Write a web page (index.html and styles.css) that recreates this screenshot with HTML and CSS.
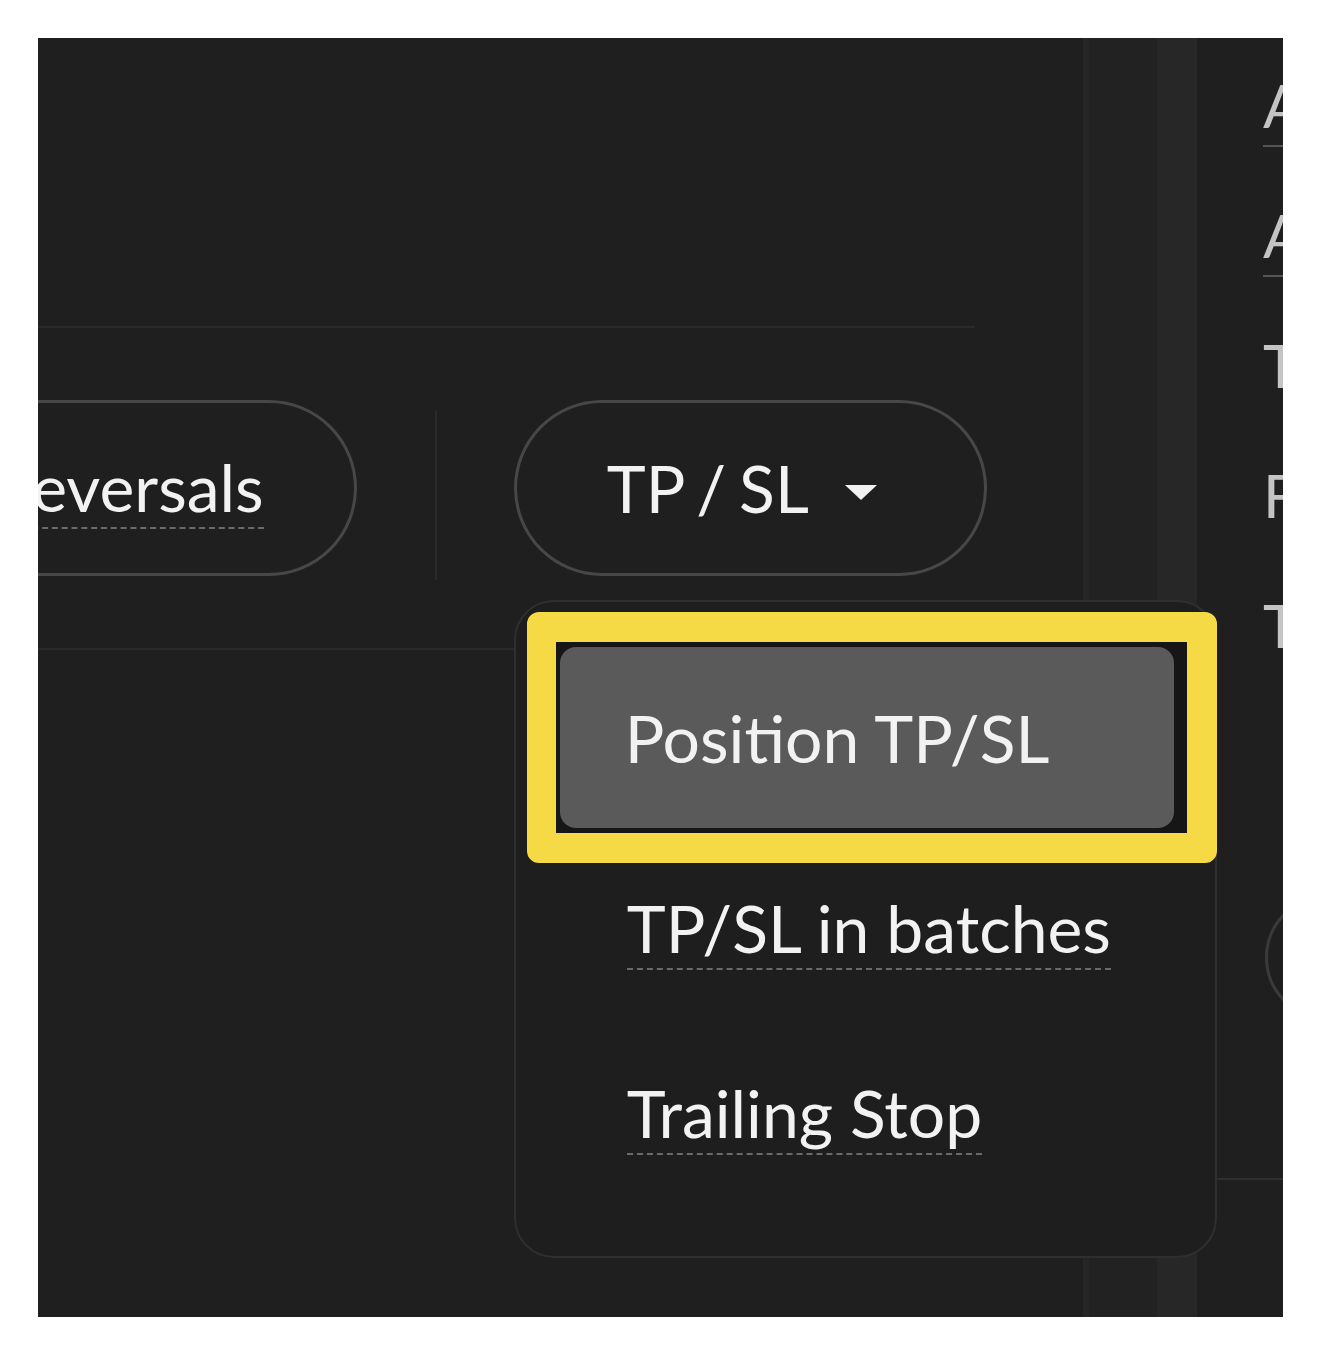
FILE: index.html
```html
<!DOCTYPE html>
<html lang="en">
<head>
    <meta charset="UTF-8">
    <meta name="viewport" content="width=device-width, initial-scale=1.0">
    <title>TP / SL menu</title>
    <link rel="stylesheet" href="styles.css">
</head>
<body>
    <div class="screen">
        <!-- Order form area -->
        <div class="main">
            <div class="top-area"></div>

            <div class="toolbar">
                <div class="pill"><span class="tip">Reversals</span></div>
                <span class="divider"></span>

                <!-- TP / SL dropdown, opened -->
                <div class="dropdown">
                    <div class="pill">TP / SL <span class="caret"></span></div>
                    <div class="menu">
                        <div class="menu-focus">
                            <div class="menu-item active">Position TP/SL</div>
                        </div>
                        <div class="menu-item"><span class="tip">TP/SL in batches</span></div>
                        <div class="menu-item"><span class="tip">Trailing Stop</span></div>
                    </div>
                </div>
            </div>
        </div>

        <div class="band band-a"></div>
        <div class="band band-b"></div>

        <!-- Right column, cut off by the screenshot -->
        <div class="side">
            <div class="side-row"><span class="side-label underlined">A</span></div>
            <div class="side-row"><span class="side-label underlined">A</span></div>
            <div class="side-row"><span class="side-label">T</span></div>
            <div class="side-row"><span class="side-label">F</span></div>
            <div class="side-row"><span class="side-label">T</span></div>
            <div class="side-circle"></div>
            <div class="side-foot"></div>
        </div>
    </div>
</body>
</html>
```

FILE: styles.css
```css
/* Colours */
:root {
    --bg-color: #1f1f1f;
    --text-color: #f2f2f2;
    --line-color: #2a2a2a;
    --pill-border: #474747;
    --item-active: #5a5a5a;
    --mark-color: #f6da45;
}

body {
    margin: 0;
    background-color: #ffffff;
    font-family: 'Lato', 'Open Sans', sans-serif;
}

/* Dark screenshot area */
.screen {
    display: flex;
    width: 1245px;
    height: 1279px;
    margin: 38px 0 37px 38px;
    background-color: var(--bg-color);
    color: var(--text-color);
    overflow: hidden;
}

.main {
    width: 1045px;
    flex-shrink: 0;
}

.top-area {
    width: 937px;
    height: 288px;
    border-bottom: 2px solid var(--line-color);
}

/* Toolbar with the pill buttons */
.toolbar {
    display: flex;
    align-items: flex-start;
    height: 248px;
    padding-top: 72px;
    margin-left: -138px;
    border-bottom: 2px solid var(--line-color);
}

.pill {
    display: flex;
    align-items: center;
    height: 176px;
    box-sizing: border-box;
    padding: 0 90px;
    border: 3px solid var(--pill-border);
    border-radius: 88px;
    font-size: 66px;
    line-height: 80px;
    white-space: nowrap;
}

.dropdown .pill {
    padding-right: 107px;
    word-spacing: -4px;
}

.tip {
    display: inline-block;
    border-bottom: 2px dashed #6a6a6a;
}

.caret {
    width: 0;
    height: 0;
    margin: 8px 0 0 36px;
    border-left: 16px solid transparent;
    border-right: 16px solid transparent;
    border-top: 15px solid var(--text-color);
}

.divider {
    width: 2px;
    height: 170px;
    margin: 10px 77px 0 78px;
    background-color: var(--line-color);
}

.dropdown {
    position: relative;
}

/* Opened menu */
.menu {
    position: absolute;
    top: 200px;
    left: 0;
    z-index: 2;
    width: 703px;
    height: 658px;
    box-sizing: border-box;
    padding: 10px 0 0 11px;
    border: 2px solid #2f2f2f;
    border-radius: 40px;
    background-color: #1e1e1e;
}

.menu-focus {
    width: 690px;
    box-sizing: border-box;
    padding: 5px 13px 5px 4px;
    border: 30px solid var(--mark-color);
    border-left-width: 29px;
    border-radius: 12px;
    background-color: #161616;
}

.menu-item {
    margin-top: 25px;
    padding-left: 100px;
    font-size: 66px;
    line-height: 80px;
}

.menu-item + .menu-item {
    margin-top: 103px;
}

.menu-item.active {
    margin: 0;
    padding-left: 65px;
    line-height: 181px;
    border-radius: 16px;
    background-color: var(--item-active);
}

/* Background strips on the right */
.band {
    flex-shrink: 0;
}

.band-a {
    width: 68px;
    border-left: 6px solid #262626;
    background-color: #222222;
}

.band-b {
    width: 40px;
    background-color: #272727;
}

.side {
    width: 86px;
    flex-shrink: 0;
    padding-top: 31px;
    padding-left: 66px;
    box-sizing: border-box;
}

.side-row {
    height: 130px;
}

.side-label {
    display: inline-block;
    font-size: 60px;
    line-height: 72px;
    color: #c4c4c4;
    white-space: nowrap;
}

.side-label.underlined {
    padding-bottom: 4px;
    border-bottom: 2px solid #555555;
}

.side-circle {
    width: 125px;
    height: 125px;
    margin: 176px 0 0 2px;
    box-sizing: border-box;
    border: 3px solid #3a3a3a;
    border-radius: 50%;
}

.side-foot {
    margin: 158px 0 0 -70px;
    border-top: 2px solid #2e2e2e;
}
```
